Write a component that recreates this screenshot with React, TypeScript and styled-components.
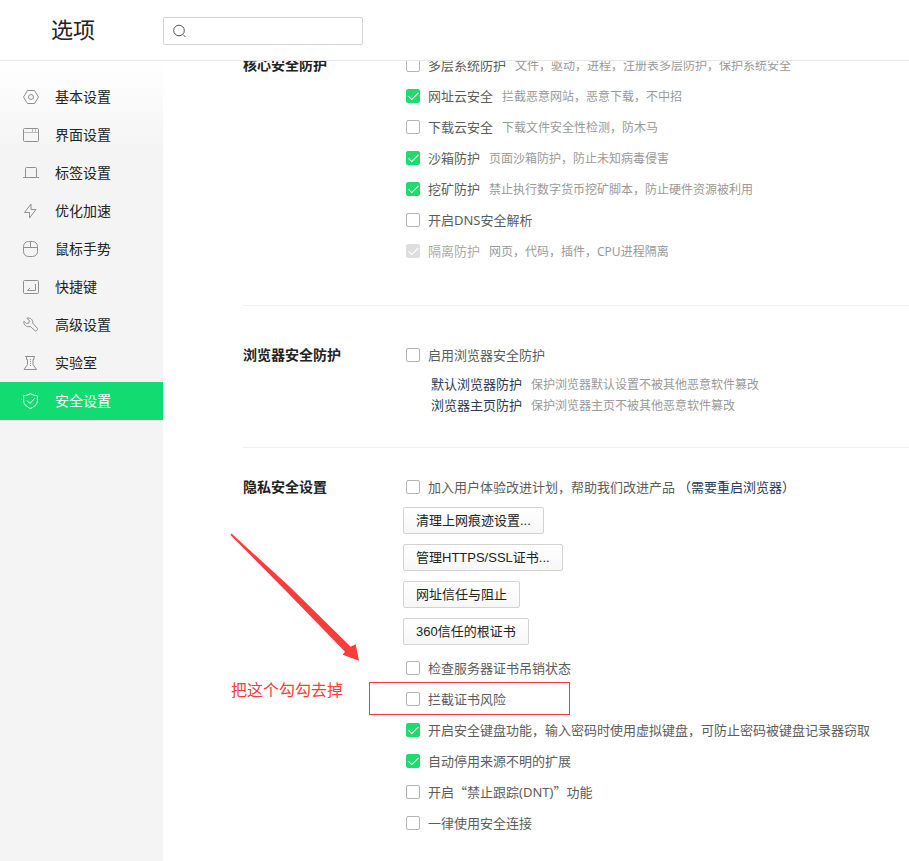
import React, { useState } from 'react';
import styled, { createGlobalStyle, css } from 'styled-components';

const GlobalStyle = createGlobalStyle`
  *, *::before, *::after { box-sizing: border-box; }
  body {
    margin: 0;
    background: #fff;
    color: #222;
    font-family: "Noto Sans", "Noto Sans CJK SC", sans-serif;
    font-size: 13px;
    line-height: 20px;
  }
  button, input { font: inherit; color: inherit; }
`;

const Page = styled.div`
  display: flex;
  flex-direction: column;
  min-height: 100vh;
`;

const Header = styled.header`
  display: flex;
  align-items: center;
  height: 61px;
  border-bottom: 1px solid #e8e8e8;
`;

const Title = styled.h1`
  flex: none;
  width: 163px;
  margin: 0;
  padding: 0 0 2px 51px;
  font-size: 22px;
  line-height: 30px;
  font-weight: 400;
  color: #222;
`;

const SearchBox = styled.label`
  display: flex;
  align-items: center;
  gap: 6px;
  width: 200px;
  height: 28px;
  margin-top: 2px;
  padding: 0 9px;
  border: 1px solid #d2d2d2;
  border-radius: 2px;
  color: #555;
`;

const SearchInput = styled.input`
  flex: 1;
  min-width: 0;
  padding: 0;
  border: 0;
  outline: 0;
  background: transparent;
`;

const Body = styled.div`
  display: flex;
  flex: 1;
`;

const Sidebar = styled.nav`
  flex: none;
  width: 163px;
  padding-top: 17px;
  background: linear-gradient(#fff, #f4f4f4 90px);
`;

const NavLink = styled.a<{ $active: boolean }>`
  display: flex;
  align-items: center;
  gap: 16px;
  height: 38px;
  padding-left: 23px;
  font-size: 14px;
  text-decoration: none;
  color: ${p => (p.$active ? '#fff' : '#222')};
  background: ${p => (p.$active ? '#12dc71' : 'transparent')};

  svg {
    flex: none;
    color: ${p => (p.$active ? '#fff' : '#8f8f8f')};
  }
`;

const Content = styled.main`
  flex: 1;
  min-width: 0;
  padding-left: 80px;
  overflow: hidden;
`;

const Scrolled = styled.div`
  margin-top: -11px;
`;

const Section = styled.section<{ $top: number; $bottom: number }>`
  position: relative;
  display: flex;
  padding: ${p => p.$top}px 0 ${p => p.$bottom}px;

  & + & { border-top: 1px solid #f0f0f0; }
`;

const SectionTitle = styled.h2`
  flex: none;
  width: 160px;
  margin: 0;
  padding: 5px 0 6px;
  font-size: 14px;
  line-height: 20px;
  font-weight: 700;
  color: #222;
`;

const Options = styled.div`
  flex: 1;
  min-width: 0;
`;

const Row = styled.div`
  position: relative;
  display: flex;
  align-items: center;
  padding: 5px 0 6px 3px;
  white-space: nowrap;
`;

const OptionLabel = styled.label<{ $disabled?: boolean }>`
  display: flex;
  align-items: center;
  gap: 8px;
  color: ${p => (p.$disabled ? '#aaa' : '#5c5c5c')};
`;

const tick = css`
  &::after {
    content: "";
    position: absolute;
    left: 4px;
    top: 0;
    width: 5px;
    height: 10px;
    border: solid #fff;
    border-width: 0 1px 1px 0;
    transform: rotate(45deg);
  }
`;

const Checkbox = styled.input.attrs({ type: 'checkbox' })`
  appearance: none;
  position: relative;
  flex: none;
  width: 14px;
  height: 14px;
  margin: 0;
  border: 1px solid #b4b4b4;
  border-radius: 2px;
  background: #fff;

  &:checked { border-color: #1fdb6b; background: #1fdb6b; ${tick} }
  &:checked:disabled { border-color: #dedede; background: #dedede; }
`;

const Hint = styled.span`
  margin-left: 9px;
  font-size: 12px;
  color: #999;

  ${Row} > & {
    padding-top: 2px;
    line-height: 18px;
  }
`;

const WideQuote = styled.span`
  font-family: "Noto Sans CJK SC", sans-serif;
`;

const Navy = styled.span`
  color: #2b3a55;

  ${Row} > & { margin-left: 3px; }
`;

const Details = styled.ul`
  margin: 0;
  padding: 3px 0 0 28px;
  list-style: none;
  line-height: 21px;
  white-space: nowrap;
`;

const Buttons = styled.div`
  display: flex;
  flex-direction: column;
  align-items: flex-start;
  gap: 10px;
  margin: 4px 0 8px;
`;

const PushButton = styled.button`
  height: 27px;
  padding: 0 12px;
  border: 1px solid #d2d2d2;
  border-radius: 2px;
  background: linear-gradient(#fff, #f7f7f7);
  color: #222;
  font-family: "Liberation Sans", "Noto Sans CJK SC", sans-serif;
  line-height: 20px;
`;

const Frame = styled.span`
  position: absolute;
  left: -34px;
  top: -2px;
  width: 201px;
  height: 33px;
  border: 1px solid #fa3c3c;
  pointer-events: none;
`;

const Arrow = styled.svg`
  position: absolute;
  left: -13px;
  top: 85px;
  pointer-events: none;
`;

const Note = styled.span`
  position: absolute;
  left: -12px;
  top: 230px;
  font-size: 16px;
  line-height: 24px;
  color: #fa3c3c;
`;

type IconName =
  | 'basic' | 'window' | 'tab' | 'bolt' | 'mouse' | 'key' | 'wrench' | 'lab' | 'shield';

const shapes: Record<IconName, React.ReactNode> = {
  basic: (
    <>
      <path d="M4.5 1.5h7L15.5 8l-4 6.5h-7L.5 8z" />
      <circle cx="8" cy="8" r="2.5" />
    </>
  ),
  window: (
    <>
      <rect x=".5" y="1.5" width="15" height="13" rx="1" />
      <path d="M.5 5.5h15M9.5 2v3M12.5 2v3" opacity=".6" />
    </>
  ),
  tab: <path d="M0 12.5h16M2.5 12.5v-9a1 1 0 0 1 1-1h9a1 1 0 0 1 1 1v9" />,
  bolt: <path d="M8 1 1.500 9.500h5v5.500L13 6.500H8z" />,
  mouse: (
    <>
      <rect x=".5" y=".5" width="14" height="15" rx="5" />
      <path d="M.5 6.5h14M7.5.5v6" />
    </>
  ),
  key: (
    <>
      <rect x=".5" y="1.5" width="15" height="13" rx="1" />
      <path d="M12.5 5v6.500h-8M7 9l-2.500 2.500" />
    </>
  ),
  wrench: (
    <path d="M3.800 1.200C7 .3 10.300 2.500 9.700 6.200L14.300 11.200c1 1.700-.9 3.600-2.500 2.300L7.300 9.500C3.700 10.700.2 7.800.9 4.300l2.600 2.200 2.500-.6.300-2.400z" />
  ),
  lab: (
    <>
      <path d="M2 1.500h10M3.500 1.500v3h1v5l-3.500 5h12.500L10 9.500v-5h1v-3" />
      <path d="M7.500 4v8" strokeDasharray="1 1" />
    </>
  ),
  shield: (
    <>
      <path d="M7.500.7C5.500 2 3 2.500.6 2.700V8c0 3.500 3.500 6 6.900 7.400C11 14 14.400 11.500 14.400 8V2.700C12 2.500 9.500 2 7.500.7z" />
      <path d="m4 7.500 3 3L11.500 5.500" />
    </>
  ),
};

const Icon = ({ name }: { name: IconName }) => (
  <svg width="16" height="16" viewBox="0 0 16 16" fill="none" stroke="currentColor" aria-hidden="true">
    {shapes[name]}
  </svg>
);

const navItems: { icon: IconName; label: string }[] = [
  { icon: 'basic', label: '基本设置' },
  { icon: 'window', label: '界面设置' },
  { icon: 'tab', label: '标签设置' },
  { icon: 'bolt', label: '优化加速' },
  { icon: 'mouse', label: '鼠标手势' },
  { icon: 'key', label: '快捷键' },
  { icon: 'wrench', label: '高级设置' },
  { icon: 'lab', label: '实验室' },
  { icon: 'shield', label: '安全设置' },
];

interface OptionProps {
  label: React.ReactNode;
  hint?: string;
  checked?: boolean;
  disabled?: boolean;
  children?: React.ReactNode;
}

const Option = ({ label, hint, checked = false, disabled, children }: OptionProps) => {
  const [on, setOn] = useState(checked);
  return (
    <Row>
      <OptionLabel $disabled={disabled}>
        <Checkbox checked={on} disabled={disabled} onChange={e => setOn(e.target.checked)} />
        <span>{label}</span>
      </OptionLabel>
      {hint && <Hint>{hint}</Hint>}
      {children}
    </Row>
  );
};

const coreOptions: OptionProps[] = [
  { label: '多层系统防护', hint: '文件，驱动，进程，注册表多层防护，保护系统安全' },
  { label: '网址云安全', hint: '拦截恶意网站，恶意下载，不中招', checked: true },
  { label: '下载云安全', hint: '下载文件安全性检测，防木马' },
  { label: '沙箱防护', hint: '页面沙箱防护，防止未知病毒侵害', checked: true },
  { label: '挖矿防护', hint: '禁止执行数字货币挖矿脚本，防止硬件资源被利用', checked: true },
  { label: '开启DNS安全解析' },
  { label: '隔离防护', hint: '网页，代码，插件，CPU进程隔离', checked: true, disabled: true },
];

const actions = ['清理上网痕迹设置...', '管理HTTPS/SSL证书...', '网址信任与阻止', '360信任的根证书'];

export default function App() {
  return (
    <Page lang="zh-CN">
      <GlobalStyle />
      <Header>
        <Title>选项</Title>
        <SearchBox>
          <svg width="14" height="14" viewBox="0 0 14 14" fill="none" stroke="currentColor" aria-hidden="true">
            <circle cx="6" cy="6.500" r="5.300" />
            <path d="m10 10.500 2.500 2.500" />
          </svg>
          <SearchInput type="text" aria-label="搜索" />
        </SearchBox>
      </Header>
      <Body>
        <Sidebar>
          {navItems.map(item => (
            <NavLink key={item.icon} href={`#${item.icon}`} $active={item.icon === 'shield'}>
              <Icon name={item.icon} />
              {item.label}
            </NavLink>
          ))}
        </Sidebar>
        <Content>
          <Scrolled>
            <Section $top={0} $bottom={38}>
              <SectionTitle>核心安全防护</SectionTitle>
              <Options>
                {coreOptions.map((option, i) => <Option key={i} {...option} />)}
              </Options>
            </Section>
            <Section $top={34} $bottom={31}>
              <SectionTitle>浏览器安全防护</SectionTitle>
              <Options>
                <Option label="启用浏览器安全防护" />
                <Details>
                  <li><Navy>默认浏览器防护</Navy><Hint>保护浏览器默认设置不被其他恶意软件篡改</Hint></li>
                  <li><Navy>浏览器主页防护</Navy><Hint>保护浏览器主页不被其他恶意软件篡改</Hint></li>
                </Details>
              </Options>
            </Section>
            <Section $top={24} $bottom={22}>
              <SectionTitle>隐私安全设置</SectionTitle>
              <Options>
                <Option label="加入用户体验改进计划，帮助我们改进产品">
                  <Navy>（需要重启浏览器）</Navy>
                </Option>
                <Buttons>
                  {actions.map(text => <PushButton key={text} type="button">{text}</PushButton>)}
                </Buttons>
                <Option label="检查服务器证书吊销状态" />
                <Option label="拦截证书风险"><Frame /></Option>
                <Option label="开启安全键盘功能，输入密码时使用虚拟键盘，可防止密码被键盘记录器窃取" checked />
                <Option label="自动停用来源不明的扩展" checked />
                <Option
                  label={<>开启<WideQuote>“</WideQuote>禁止跟踪(DNT)<WideQuote>”</WideQuote>功能</>}
                />
                <Option label="一律使用安全连接" />
              </Options>
              <Arrow width="130" height="130" viewBox="0 0 130 130" fill="#fa3c3c" aria-hidden="true">
                <path d="M1.500.5 60 54 120.700 113.700 125.700 111.300 129 127.700 112.700 121.700 115 118.700 56 58 .5 2z" />
              </Arrow>
              <Note>把这个勾勾去掉</Note>
            </Section>
          </Scrolled>
        </Content>
      </Body>
    </Page>
  );
}
